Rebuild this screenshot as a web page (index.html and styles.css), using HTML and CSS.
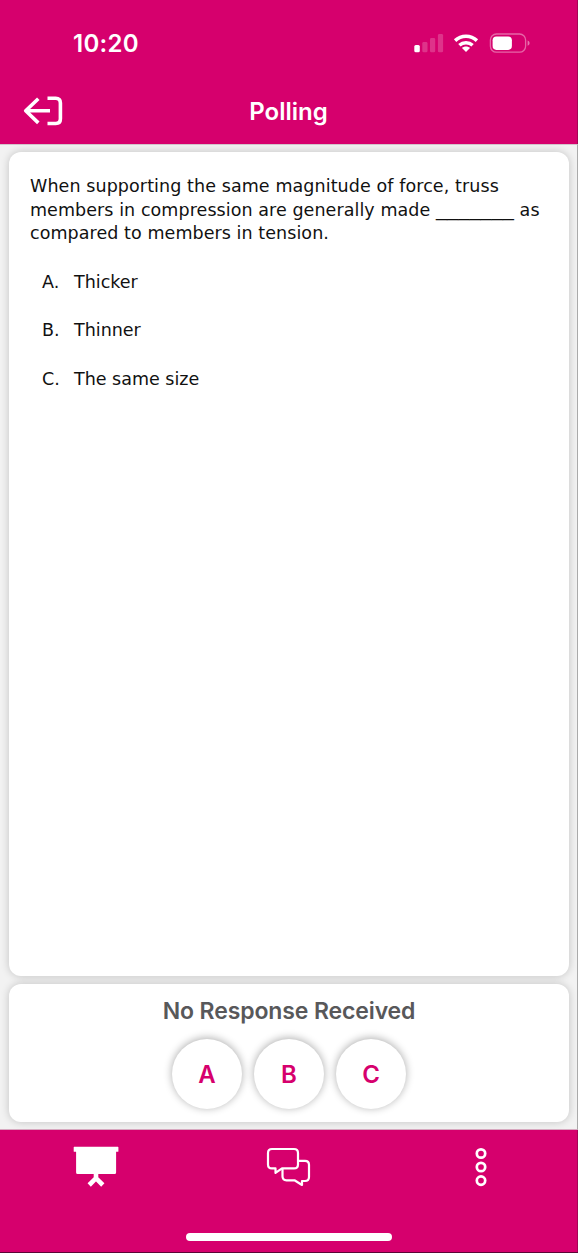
FILE: index.html
```html
<!DOCTYPE html>
<html lang="en">
  <head>
    <meta charset="utf-8">
    <title>Polling</title>
    <link rel="stylesheet" href="styles.css">
  </head>
  <body>
    <div class="app">
      <header class="header">
        <div class="status">
          <span class="time">10:20</span>
          <svg class="status-icons" width="118" height="24" viewBox="412 31 118 24">
            <g fill="#fff">
              <rect x="414.3" y="45" width="5.5" height="7.3" rx="1.5"/>
              <g opacity=".2">
                <rect x="422.3" y="42" width="5.2" height="10.3" rx="1.4"/>
                <rect x="430" y="38" width="5.2" height="14.3" rx="1.4"/>
                <rect x="437.9" y="34" width="5.2" height="18.3" rx="1.4"/>
              </g>
              <path d="M466 52l-4-4c2-2 6-2 8 0z"/>
            </g>
            <g fill="none" stroke="#fff" stroke-width="3.5">
              <path d="M459.4 45.2c3.7-3.3 9.5-3.3 13.2 0"/>
              <path d="M455.1 40.6c6.1-5.7 15.7-5.7 21.8 0"/>
            </g>
            <rect x="490.4" y="34" width="35.2" height="18.2" rx="6" fill="none" stroke="#fff" stroke-opacity=".4" stroke-width="1.3"/>
            <rect x="492.6" y="36.4" width="19.3" height="13.5" rx="3.8" fill="#fff"/>
            <path d="M527.6 40.6c2.6 1 2.6 4.3 0 5.2z" fill="#fff" opacity=".45"/>
          </svg>
        </div>
        <div class="titlebar">
          <svg class="exit" width="42" height="32" viewBox="22 95 42 32" fill="none" stroke="#fff" stroke-width="3.6" stroke-linejoin="round">
            <path d="M50 110.8H26M38.3 98.7L25.7 110.8l12.6 12.1"/>
            <path d="M47.5 98.2h8.2q4.7 0 4.7 4.7v15.9q0 4.7-4.7 4.7h-8.2"/>
          </svg>
          <h1>Polling</h1>
        </div>
      </header>

      <main class="content">
        <section class="card question">
          <p>
            <span class="line first">When supporting the same magnitude of force, truss</span>
            <span class="line">members in compression are generally made <span class="blank">_______</span> as</span>
            <span class="line">compared to members in tension.</span>
          </p>
          <ol>
            <li><span class="letter">A.</span>Thicker</li>
            <li><span class="letter">B.</span>Thinner</li>
            <li><span class="letter">C.</span>The same size</li>
          </ol>
        </section>

        <section class="card response">
          <h2>No Response Received</h2>
          <div class="choices">
            <button>A</button>
            <button>B</button>
            <button>C</button>
          </div>
        </section>
      </main>

      <footer class="footer">
        <nav>
          <a>
            <svg width="46" height="44" viewBox="73 1145 46 44">
              <path fill="#fff" d="M74.2 1146.8h43.7q.5 0 .5.5v4q0 .5-.5.5h-1.8v20.6q0 1.5-1.5 1.5H77.6q-1.5 0-1.5-1.5v-20.6h-1.9q-.5 0-.5-.5v-4q0-.5.5-.5z"/>
              <path fill="none" stroke="#fff" stroke-width="4.6" d="M96 1172v6M89.2 1185l6.8-6.8 6.8 6.8"/>
            </svg>
          </a>
          <a>
            <svg width="46" height="44" viewBox="266 1145 46 44" fill="none" stroke="#fff" stroke-width="2.2" stroke-linejoin="round">
              <path d="M272 1149h22q4 0 4 4v11.4q0 4-4 4h-12l-6.5 4.5v-4.5H272q-4 0-4-4V1153q0-4 4-4z"/>
              <path d="M298 1160.8h7q4 0 4 4v12.2q0 4-4 4h-3v4l-7.5-4.7H286.5q-4 0-4-4v-7.5"/>
            </svg>
          </a>
          <a>
            <svg width="46" height="44" viewBox="458 1145 46 44" fill="none" stroke="#fff" stroke-width="2.7">
              <circle cx="481" cy="1153.5" r="4.2"/>
              <circle cx="481" cy="1167" r="4.2"/>
              <circle cx="481" cy="1180.6" r="4.2"/>
            </svg>
          </a>
        </nav>
        <div class="home-bar"></div>
      </footer>
    </div>
  </body>
</html>
```

FILE: styles.css
```css
* { box-sizing: border-box; }
body { margin: 0; background: #d6006d; }
h1, h2, p, ol { margin: 0; padding: 0; }
.app {
  display: flex;
  flex-direction: column;
  width: 578px;
  height: 1253px;
  font-family: Inter, "Liberation Sans", sans-serif;
  border-bottom: 1px solid #5b0535;
}
.header {
  height: 144px;
  color: #fff;
  background: #d6006d;
  border-right: 1px solid #a30456;
}
.status {
  display: flex;
  justify-content: space-between;
  height: 80px;
  padding: 31px 47px 0 73px;
}
.time {
  font-size: 24px;
  font-weight: 580;
  line-height: 26px;
  letter-spacing: .3px;
}
.titlebar {
  display: grid;
  grid-template-columns: 42px 1fr 42px;
  align-items: center;
  height: 64px;
  padding: 0 22px;
}
.exit { margin-top: -2px; }
h1 {
  font-size: 24px;
  font-weight: 580;
  line-height: 30px;
  text-align: center;
}
.content {
  display: flex;
  flex-direction: column;
  gap: 8px;
  height: 986px;
  padding: 7px 8px 7px 9px;
  background: #f2f2f2;
  border-top: 1px solid #d3c5cc;
  border-bottom: 1px solid #d8a9c0;
  border-right: 1px solid #aaa;
}
.card {
  background: #fff;
  border-radius: 12px;
  box-shadow: 0 0 9px rgba(0, 0, 0, .2);
}
.question {
  flex: 1;
  padding: 23px 21px;
  color: #111;
  font: 17.5px/23.5px "DejaVu Sans", sans-serif;
}
.line {
  display: block;
  letter-spacing: .07px;
  white-space: nowrap;
}
.first { letter-spacing: .09px; }
.blank {
  font: 20px/1px "Liberation Sans", sans-serif;
  letter-spacing: .02px;
}
ol {
  display: grid;
  gap: 25px;
  margin-top: 25px;
  padding-left: 12px;
  list-style: none;
}
li { display: flex; }
.letter { width: 32px; }
.response {
  height: 138px;
  padding-top: 13px;
}
h2 {
  color: #58585a;
  font-size: 23px;
  font-weight: 600;
  line-height: 29px;
  letter-spacing: -.12px;
  text-align: center;
}
.choices {
  display: flex;
  justify-content: center;
  gap: 12px;
  margin-top: 13px;
}
button {
  width: 70px;
  height: 70px;
  padding: 1px 0 0;
  border: 0;
  border-radius: 50%;
  background: #fff;
  box-shadow: 0 -1px 8px rgba(0, 0, 0, .33);
  color: #d6006d;
  font: 600 24px/70px Inter, sans-serif;
}
.footer {
  flex: 1;
  background: #d6006d;
  border-right: 1px solid #a30456;
}
nav {
  display: flex;
  justify-content: space-between;
  padding: 15px 73px 0;
}
nav svg { display: block; }
.home-bar {
  width: 206px;
  height: 8px;
  margin: 44px auto 0;
  border-radius: 4px;
  background: #fff;
}
```
